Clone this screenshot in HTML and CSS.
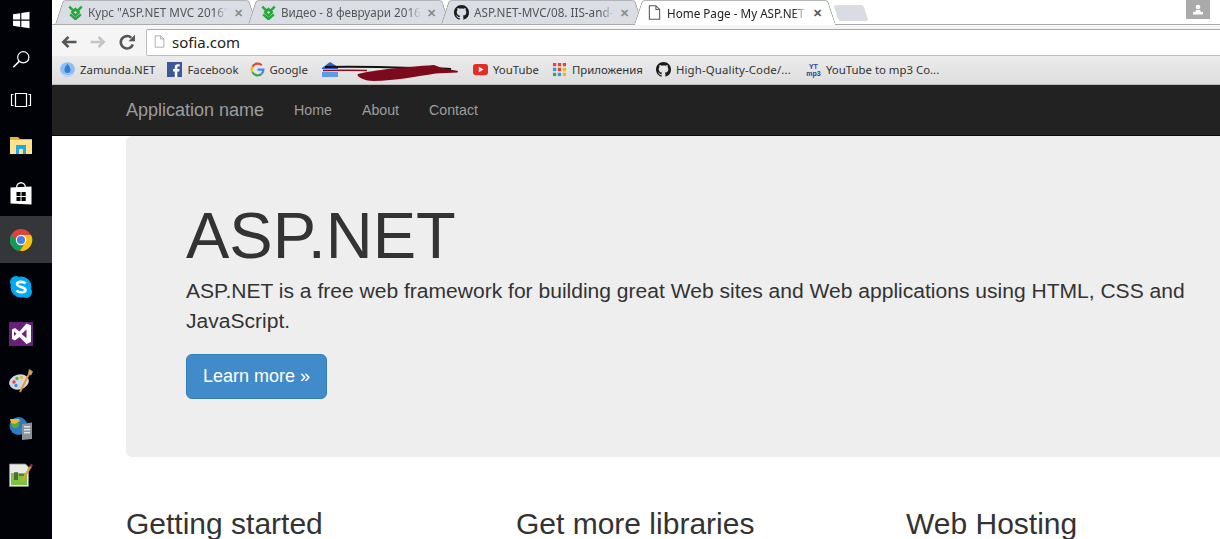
FILE: index.html
```html
<!DOCTYPE html>
<html lang="en">

<head>
    <meta charset="UTF-8">
    <meta name="viewport" content="width=device-width, initial-scale=1.0">
    <title>Home Page - My ASP.NET Application</title>
    <link rel="stylesheet" href="styles.css">
</head>

<body>
    <svg class="defs" width="0" height="0">
        <symbol id="gh" viewBox="0 0 16 16">
            <path fill="#1b1b1b" d="M8 0C3.58 0 0 3.58 0 8c0 3.54 2.29 6.53 5.47 7.59.4.07.55-.17.55-.38 0-.19-.01-.82-.01-1.49-2.01.37-2.53-.49-2.69-.94-.09-.23-.48-.94-.82-1.13-.28-.15-.68-.52-.01-.53.63-.01 1.08.58 1.23.82.72 1.21 1.87.87 2.33.66.07-.52.28-.87.51-1.07-1.78-.2-3.64-.89-3.64-3.95 0-.87.31-1.59.82-2.15-.08-.2-.36-1.02.08-2.12 0 0 .67-.21 2.2.82.64-.18 1.32-.27 2-.27.68 0 1.36.09 2 .27 1.53-1.04 2.2-.82 2.2-.82.44 1.1.16 1.92.08 2.12.51.56.82 1.27.82 2.15 0 3.07-1.87 3.75-3.65 3.95.29.25.54.73.54 1.48 0 1.07-.01 1.93-.01 2.2 0 .21.15.46.55.38A8.013 8.013 0 0016 8c0-4.42-3.58-8-8-8z"/>
        </symbol>
        <symbol id="leaf" viewBox="0 0 16 16">
            <path fill="none" stroke="#23a83c" stroke-width="2.600" d="M8 4.300 11.500 7.800 8 11.300 4.500 7.800ZM1.300 1.800 5.300 5.600M14.700 1.800 10.700 5.600M2.300 10 8 15 13.700 10"/>
        </symbol>
        <symbol id="page" viewBox="0 0 14 16">
            <path fill="#fff" stroke="#555" stroke-width="1.1" d="M1.500.8h7l4 4v10.400h-11zM8.500.8v4h4"/>
        </symbol>
    </svg>

    <div class="screen">
        <aside class="taskbar">
            <div class="task-item task-short">
                <svg class="task-icon" viewBox="0 0 24 24"><path fill="#fff" d="M4 6.300 11.200 5.200v6.400H4zM12.300 5 20.500 3.800v7.800h-8.200zM4 12.700h7.200v6.200L4 17.800zM12.300 12.700h8.200v7.600L12.300 19.100z"/></svg>
            </div>
            <div class="task-item task-short">
                <svg class="task-icon" viewBox="0 0 24 24"><circle cx="14.300" cy="9.300" r="5.600" fill="none" stroke="#fff" stroke-width="1.200"/><path d="M10.200 13.400 4.300 19.300" stroke="#fff" stroke-width="1.500"/></svg>
            </div>
            <div class="task-item task-view">
                <svg class="task-icon" viewBox="0 0 24 24"><path fill="none" stroke="#fff" stroke-width="1.200" d="M6.500 4.500h11v13h-11zM4.500 5.500H2.500V16.500H4.500M19.500 5.500h2V16.500h-2"/></svg>
            </div>
            <div class="task-item">
                <svg class="task-icon" viewBox="0 0 24 24"><path fill="#e8b23c" d="M1 3h8l2 2h12v5H1z"/><path fill="#ffe28a" d="M1 6h22v14H1z"/><path fill="#21a6e6" d="M7 11h10v9h-3v-5h-4v5H7z"/></svg>
            </div>
            <div class="task-item">
                <svg class="task-icon" viewBox="0 0 24 24"><path fill="none" stroke="#fff" stroke-width="1.300" d="M7.500 7c0-7 9-7 9 0"/><path fill="#fff" d="M1.500 6.500 22.500 5.500v18l-21-1z"/><path fill="#000" d="M7.500 11h4v4h-4zM12.500 11h4.200v4h-4.200zM7.500 16h4v4h-4zM12.500 16h4.200v4h-4.200z"/></svg>
            </div>
            <div class="task-item task-active">
                <svg class="task-icon" viewBox="0 0 24 24">
                    <circle cx="12" cy="12" r="11" fill="#db4437"/>
                    <path fill="#0f9d58" d="M2.600 6.200A11 11 0 0 0 11 23l5.200-9H8z"/>
                    <path fill="#f4c20d" d="M12 7h10a11 11 0 0 1-11 16l5.500-9z"/>
                    <circle cx="12" cy="12" r="5.200" fill="#fff"/>
                    <circle cx="12" cy="12" r="4.100" fill="#4a7fe8"/>
                </svg>
            </div>
            <div class="task-item">
                <svg class="task-icon" viewBox="0 0 24 24"><circle cx="7" cy="7" r="6" fill="#00a9f0"/><circle cx="17" cy="17" r="6" fill="#00a9f0"/><circle cx="12" cy="12" r="10.500" fill="#00a9f0"/><path fill="none" stroke="#fff" stroke-width="2.600" d="M16.500 8.500C15 6.500 8.500 6 8 9c-.5 3.500 8.500 2.500 8.500 6 0 3-7 3-9 .5"/></svg>
            </div>
            <div class="task-item">
                <svg class="task-icon" viewBox="0 0 24 24"><path fill="#68217a" d="M0 0h24v24H0z"/><path fill="#fff" d="M17.500 1.500 22 3.500v16.500l-4.500 2-7-7-4.500 3.500-3-1.500V7.500l3-1.500 4.500 3.500zM5 9.500v4.500l2.500-2.200zM17.500 7.500 12.500 12l5 4.300z"/></svg>
            </div>
            <div class="task-item">
                <svg class="task-icon" viewBox="0 0 24 24"><ellipse cx="10" cy="13" rx="10" ry="7.500" fill="#cfd8e2" transform="rotate(-15 10 13)"/><circle cx="5" cy="13" r="1.700" fill="#d8483a"/><circle cx="8" cy="9.500" r="1.700" fill="#5bb04c"/><circle cx="12.500" cy="8.500" r="1.700" fill="#eeb73a"/><circle cx="7" cy="16.500" r="1.700" fill="#4a86d8"/><path d="M11 23 20 5" stroke="#e89a2a" stroke-width="1.800"/><path fill="#c9a06a" d="M19 5 20 0l4 2.500-2 4z"/></svg>
            </div>
            <div class="task-item">
                <svg class="task-icon" viewBox="0 0 24 24"><circle cx="9.500" cy="10" r="9" fill="#2b7cc4"/><path fill="#58a83c" d="M3 6c3-3 6-2 7 1s-2 6-5 5-3-4-2-6zM12 13l5 1-3 5z"/><path fill="#f1b72f" d="M1 3h9l1 2-5 3-4-1z"/><path fill="#8b9298" d="M13 8l10-1.500V23l-10 1z"/><path fill="#dfe3e6" d="M15 10h6v1.500h-6zM15 13h6v1.500h-6zM15 16h6v1.500h-6z"/></svg>
            </div>
            <div class="task-item">
                <svg class="task-icon" viewBox="0 0 24 24"><path fill="#e8ebe4" stroke="#888" stroke-width=".8" d="M.5 1h16l3 3v19.500H.5z"/><path fill="#7ec23f" d="M2 10h16v12H2z"/><path stroke="#333" stroke-width="1.200" d="M6 9v8M8 9v8M10 12h5"/><path stroke="#d8a23a" stroke-width="2.400" d="M13 18 22 3"/><path stroke="#a3322a" stroke-width="2.400" d="M21.500 3.800 23 1.300"/></svg>
            </div>
        </aside>

        <div class="main">
            <div class="browser-top">
                <div class="tabstrip">
                    <div class="tab">
                        <svg class="favicon"><use href="#leaf"/></svg>
                        <span class="tab-title">Курс "ASP.NET MVC 2016"</span>
                        <span class="tab-close">✕</span>
                    </div>
                    <div class="tab">
                        <svg class="favicon"><use href="#leaf"/></svg>
                        <span class="tab-title">Видео - 8 февруари 2016</span>
                        <span class="tab-close">✕</span>
                    </div>
                    <div class="tab">
                        <svg class="favicon"><use href="#gh"/></svg>
                        <span class="tab-title">ASP.NET-MVC/08. IIS-and-</span>
                        <span class="tab-close">✕</span>
                    </div>
                    <div class="tab tab-active">
                        <svg class="favicon"><use href="#page"/></svg>
                        <span class="tab-title">Home Page - My ASP.NET</span>
                        <span class="tab-close">✕</span>
                    </div>
                    <div class="tab-new"></div>
                    <div class="user-btn">
                        <svg width="12" height="12" viewBox="0 0 12 12"><circle cx="6" cy="3" r="2.300" fill="#fff"/><path fill="#fff" d="M3.800 6h4.400l.6 2H11v2.500H1V8h2.200z"/></svg>
                    </div>
                </div>

                <div class="toolbar">
                    <svg class="nav-btn" viewBox="0 0 16 16"><path fill="none" stroke="#555" stroke-width="2.600" d="M15.500 8H2.500M7.500 2.800 2.300 8l5.200 5.200"/></svg>
                    <svg class="nav-btn" viewBox="0 0 16 16"><path fill="none" stroke="#c4c4c4" stroke-width="2.600" d="M.5 8h13M8.500 2.800 13.700 8l-5.200 5.200"/></svg>
                    <svg class="nav-btn" viewBox="0 0 16 16"><path fill="none" stroke="#555" stroke-width="2.600" d="M13.800 10.500A6.200 6.200 0 1 1 12.300 3.800"/><path fill="#555" d="M9.500 7.300H16V.8z"/></svg>
                    <div class="omnibox">
                        <svg class="omni-page" viewBox="0 0 14 16"><path fill="#fff" stroke="#999" d="M1.500.8h7l4 4v10.400h-11zM8.500.8v4h4"/></svg>
                        <span class="omni-text">sofia.com</span>
                    </div>
                </div>

                <div class="bookmarks">
                    <div class="bookmark">
                        <svg class="bm-icon" viewBox="0 0 16 16"><circle cx="8" cy="8" r="7.800" fill="#8fbdf0"/><path fill="#2f7fd8" d="M8 2c2 2 3.200 4 3.200 6.500a3.200 3.200 0 0 1-6.400 0C4.800 6 6 4 8 2z"/><path fill="#bcd8f5" d="M1 10c3 5 11 5 14 0-1 4-4 6-7 6s-6-2-7-6z"/></svg>
                        <span>Zamunda.NET</span>
                    </div>
                    <div class="bookmark">
                        <svg class="bm-icon" viewBox="0 0 16 16"><path fill="#3b5998" d="M0 0h16v16H0z"/><path fill="#fff" d="M11 16v-6h2l.4-2.500H11V6c0-.8.300-1.200 1.200-1.200h1.300V2.500h-2C9.500 2.500 8.300 3.800 8.300 5.700v1.800H6.500V10h1.800v6z"/></svg>
                        <span>Facebook</span>
                    </div>
                    <div class="bookmark bm-google">
                        <svg class="bm-icon" viewBox="0 0 16 16"><path fill="none" stroke="#ea4335" stroke-width="2.400" d="M12.500 3.500A6.300 6.300 0 0 0 2.600 5"/><path fill="none" stroke="#fbbc05" stroke-width="2.400" d="M2.600 5a6.300 6.300 0 0 0 0 6"/><path fill="none" stroke="#34a853" stroke-width="2.400" d="M2.600 11a6.300 6.300 0 0 0 9.900 1.500"/><path fill="none" stroke="#4285f4" stroke-width="2.400" d="M12.500 12.500A6.300 6.300 0 0 0 14.300 8H8"/></svg>
                        <span>Google</span>
                    </div>
                    <svg class="bm-hidden" viewBox="0 0 138 22">
                        <path fill="#2f5fc0" d="M0 9 8 3l8 5v2H0z"/>
                        <path fill="#5b9be8" d="M0 13h16v5H0z"/>
                        <path stroke="#111" stroke-width="2" fill="none" d="M3 8c30-1 60 0 88 1 15 .5 25 0 38 1"/>
                        <path stroke="#8b0f1f" stroke-width="1.500" fill="none" d="M1 11.500c20-.5 32-.5 44 0"/>
                        <path fill="#7d0a1c" d="M36 15c16-4 46-7 76-9l8 3 16 3-.5 1.500-22 1c-18 3-40 7-62 7.500-10 0-18-5-15.500-7z"/>
                    </svg>
                    <div class="bookmark">
                        <svg class="bm-icon" viewBox="0 0 16 16"><rect y="2" width="16" height="12" rx="3" fill="#e52d27"/><path fill="#fff" d="M6.200 5v6l5-3z"/></svg>
                        <span>YouTube</span>
                    </div>
                    <div class="bookmark bm-nudge">
                        <svg class="bm-icon" viewBox="0 0 16 16">
                            <path fill="#e0492f" d="M1 1h3.500v3.500H1zM6.200 1h3.500v3.500H6.200zM11.500 1H15v3.500h-3.500z"/>
                            <path fill="#3f8fe8" d="M1 6.200h3.500v3.500H1z"/><path fill="#e0492f" d="M6.200 6.200h3.500v3.500H6.200z"/><path fill="#f6b01e" d="M11.500 6.200H15v3.500h-3.500z"/>
                            <path fill="#3aa655" d="M1 11.500h3.500V15H1z"/><path fill="#3f8fe8" d="M6.200 11.500h3.500V15H6.200z"/><path fill="#f6b01e" d="M11.500 11.500H15V15h-3.500z"/>
                        </svg>
                        <span>Приложения</span>
                    </div>
                    <div class="bookmark bm-nudge bm-code">
                        <svg class="bm-icon"><use href="#gh"/></svg>
                        <span>High-Quality-Code/...</span>
                    </div>
                    <div class="bookmark bm-mp3">
                        <div class="yt-mp3"><span>YT</span><span>mp3</span></div>
                        <span>YouTube to mp3 Co...</span>
                    </div>
                </div>
            </div>

            <nav class="navbar">
                <a class="brand" href="#">Application name</a>
                <ul class="nav-links">
                    <li><a href="#">Home</a></li>
                    <li><a href="#">About</a></li>
                    <li><a href="#">Contact</a></li>
                </ul>
            </nav>

            <div class="container">
                <section class="jumbotron">
                    <h1>ASP.NET</h1>
                    <p class="lead">ASP.NET is a free web framework for building great Web sites and Web applications using HTML, CSS and JavaScript.</p>
                    <a class="btn-learn" href="#">Learn more »</a>
                </section>
                <div class="columns">
                    <h2>Getting started</h2>
                    <h2>Get more libraries</h2>
                    <h2>Web Hosting</h2>
                </div>
            </div>
        </div>
    </div>
</body>

</html>
```

FILE: styles.css
```css
/* page frame */
html,
body {
    margin: 0;
    padding: 0;
    height: 539px;
    overflow: hidden;
    background-color: #fff;
}

.defs {
    position: absolute;
}

.screen {
    display: flex;
    height: 539px;
    overflow: hidden;
}

/* windows taskbar */
.taskbar {
    width: 52px;
    flex: none;
    background-color: #010208;
    display: flex;
    flex-direction: column;
}

.task-item {
    height: 47px;
    flex: none;
    display: flex;
    align-items: center;
    padding-left: 9px;
}

.task-short {
    height: 40px;
}

.task-view {
    height: 42px;
}

.task-active {
    background-color: #35363a;
}

.task-icon {
    width: 24px;
    height: 24px;
}

.main {
    flex: 1;
    min-width: 0;
}

/* chrome */
.browser-top {
    font-family: "Noto Sans", sans-serif;
    font-size: 11.7px;
}

.tabstrip {
    display: flex;
    height: 24px;
    padding-left: 4px;
    background-color: #fff;
    border-bottom: 1px solid #aaa;
    position: relative;
}

.tab {
    position: relative;
    isolation: isolate;
    width: 200px;
    height: 24px;
    margin-right: -7px;
    padding-left: 12px;
    box-sizing: border-box;
    display: flex;
    align-items: center;
    flex: none;
    color: #555;
}

.tab::before,
.tab::after {
    content: "";
    position: absolute;
    top: 0;
    bottom: 0;
    width: 51%;
    z-index: -1;
    background-color: #dadee4;
    border-top: 1px solid #b4b6ba;
    box-sizing: border-box;
}

.tab::before {
    left: 3px;
    transform: skewX(-18deg);
    border-left: 1px solid #9a9a9a;
    border-top-left-radius: 3px;
}

.tab::after {
    right: 3px;
    transform: skewX(18deg);
    border-right: 1px solid #9a9a9a;
    border-top-right-radius: 3px;
}

.tab-active {
    z-index: 2;
    height: 25px;
    color: #222;
}

.tab-active::before,
.tab-active::after {
    background-color: #fff;
}

.favicon {
    width: 15px;
    height: 15px;
    flex: none;
}

.tab-title {
    width: 140px;
    margin-left: 5px;
    flex: none;
    white-space: nowrap;
    overflow: hidden;
    -webkit-mask-image: linear-gradient(to right, #000 90%, transparent);
    mask-image: linear-gradient(to right, #000 90%, transparent);
}

.tab-close {
    margin-left: 6px;
    font-size: 11px;
    font-weight: bold;
    color: #8a8a8a;
}

.tab-active .tab-close {
    color: #555;
}

.tab-new {
    width: 30px;
    height: 16px;
    margin: 5px 0 0 8px;
    background-color: #d9dde3;
    border-radius: 3px;
    transform: skewX(18deg);
    flex: none;
}

.user-btn {
    width: 24px;
    height: 19px;
    margin-left: auto;
    margin-right: 10px;
    background-color: #aaa;
    display: flex;
    align-items: center;
    justify-content: center;
    flex: none;
}

.toolbar {
    height: 31px;
    padding-left: 9px;
    background-color: #f5f5f5;
    display: flex;
    align-items: flex-end;
    box-sizing: border-box;
}

.nav-btn {
    width: 16px;
    height: 16px;
    margin: 0 13px 6px 0;
    flex: none;
}

.omnibox {
    flex: 1;
    height: 27px;
    margin-left: -2px;
    background-color: #fff;
    border: 1px solid #bdbdbd;
    border-top-color: #a8a8a8;
    border-right: none;
    border-radius: 2px 0 0 2px;
    box-sizing: border-box;
    display: flex;
    align-items: center;
    padding: 0 0 2px 7px;
}

.omni-page {
    width: 11px;
    height: 13px;
    margin-right: 7px;
}

.omni-text {
    font-size: 15px;
    color: #222;
}

.bookmarks {
    height: 29px;
    padding: 0 0 1px 8px;
    box-sizing: border-box;
    background: linear-gradient(#ececec, #dedede);
    border-bottom: 1px solid #bbb;
    display: flex;
    align-items: center;
    gap: 12px;
    font-size: 11.4px;
    color: #333;
    white-space: nowrap;
}

.bookmark {
    display: flex;
    align-items: center;
    gap: 5px;
}

.bm-google {
    margin-left: -1px;
}

.bm-nudge {
    margin-left: 1px;
}

.bm-code span {
    letter-spacing: 0.15px;
}

.bm-mp3 {
    margin-left: 3px;
}

.bm-icon {
    width: 15px;
    height: 15px;
    flex: none;
}

.bm-hidden {
    width: 138px;
    height: 22px;
    margin: 0 1px 0 2px;
    flex: none;
}

.yt-mp3 {
    width: 15px;
    display: flex;
    flex-direction: column;
    align-items: center;
    font-family: "Liberation Sans", sans-serif;
    font-weight: bold;
    font-size: 7px;
    line-height: 7px;
    color: #2a3f9e;
}

/* site navbar */
.navbar {
    height: 51px;
    box-sizing: border-box;
    background-color: #222;
    border-bottom: 1px solid #080808;
    padding-left: 74px;
    display: flex;
    align-items: center;
    font-family: "Liberation Sans", Arial, sans-serif;
}

.brand {
    color: #9d9d9d;
    font-size: 18px;
    text-decoration: none;
    margin-right: 15px;
}

.nav-links {
    list-style: none;
    margin: 0;
    padding: 0;
    display: flex;
}

.nav-links a {
    display: block;
    padding: 0 15px;
    color: #9d9d9d;
    font-size: 14.2px;
    text-decoration: none;
}

/* page body */
.container {
    width: 1170px;
    margin-left: 74px;
    font-family: "Liberation Sans", Arial, sans-serif;
    color: #333;
}

.jumbotron {
    height: 321px;
    box-sizing: border-box;
    padding: 48px 60px;
    background-color: #eee;
    border-radius: 6px;
    margin-bottom: 30px;
}

.jumbotron h1 {
    margin: 16px 0 4px;
    font-size: 65px;
    font-weight: 500;
    line-height: 72px;
}

.lead {
    margin: 0 0 19px;
    font-size: 21.06px;
    line-height: 29.5px;
    font-weight: 200;
}

.btn-learn {
    display: inline-block;
    padding: 10px 16px;
    font-size: 18px;
    line-height: 23px;
    color: #fff;
    text-decoration: none;
    background-color: #428bca;
    border: 1px solid #357ebd;
    border-radius: 6px;
}

.columns {
    display: flex;
}

.columns h2 {
    width: 390px;
    margin: 20px 0 10px;
    flex: none;
    font-size: 30px;
    font-weight: 500;
    line-height: 1.1;
}
```
